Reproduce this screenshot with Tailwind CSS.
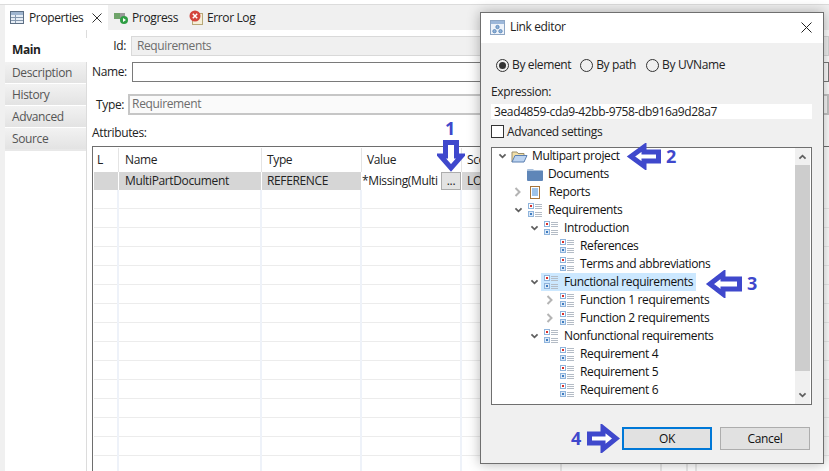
<!DOCTYPE html>
<html>
<head>
<meta charset="utf-8">
<script src="https://cdn.jsdelivr.net/npm/@tailwindcss/browser@4"></script>
</head>
<body>
<svg width="0" height="0" class="absolute">
  <defs>
    <symbol id="req" viewBox="0 0 14 15">
      <rect x="0.5" y="0.5" width="5" height="5" fill="#fff" stroke="#8fb4dc"/>
      <rect x="2" y="2" width="2" height="2" fill="#d8302a"/>
      <rect x="0.5" y="8.5" width="5" height="5" fill="#dce9f7" stroke="#8fb4dc"/>
      <rect x="2" y="10" width="2" height="2" fill="#3f7cc0"/>
      <path d="M7 1.500h7M7 3.500h7M7 5.500h7M7 9.500h7M7 11.500h7M7 13.500h7" stroke="#b4bcc6" stroke-width="1"/>
    </symbol>
    <symbol id="down" viewBox="0 0 10 8">
      <path d="M1.500 1.500 5 5 8.500 1.500" fill="none" stroke="#5f5f5f" stroke-width="2"/>
    </symbol>
    <symbol id="right" viewBox="0 0 8 10">
      <path d="M1.500 1 5.500 5 1.500 9" fill="none" stroke="#b4b4b4" stroke-width="2"/>
    </symbol>
  </defs>
</svg>

<div class="relative w-[829px] h-[471px] overflow-hidden bg-white text-[12px] leading-[16px] text-[#111] font-['Open_Sans','Liberation_Sans',sans-serif] tracking-[-0.37px]">

  <!-- view tabs -->
  <div class="mt-[4px] flex h-[26px] border-t border-[#dcdcdc] bg-[#f0f0f0] pl-[5px] items-stretch">
    <div class="flex w-[103px] items-center bg-white pl-[5px]">
      <svg width="14" height="13" viewBox="0 0 14 13" class="shrink-0"><rect x="0.5" y="0.5" width="13" height="12" fill="#e6edf5" stroke="#5d6f84"/><rect x="1" y="1" width="12" height="3" fill="#9fb5cf"/><path d="M1 6.500h12M1 9.500h12M5.500 4v8" stroke="#8497ad"/></svg>
      <span class="ml-[5px] text-[#222]">Properties</span>
      <svg width="10" height="10" viewBox="0 0 10 10" class="ml-[9px]"><path d="M.5.5l9 9M9.500.5l-9 9" stroke="#333" stroke-width="1"/></svg>
    </div>
    <div class="ml-[6px] flex items-center">
      <svg width="14" height="13" viewBox="0 0 14 13"><rect x="0" y="2" width="11" height="6" fill="#9a9a9a"/><rect x="0" y="2" width="6" height="6" fill="#6fa46a"/><circle cx="10" cy="9" r="4" fill="#2f9e44"/><path d="M9 7l3 2-3 2z" fill="#fff"/></svg>
      <span class="ml-[4px] text-[#222]">Progress</span>
    </div>
    <div class="ml-[10px] flex items-center">
      <svg width="16" height="15" viewBox="0 0 16 15"><rect x="4.500" y="3.500" width="10" height="11" fill="#f6efd8" stroke="#b8a878"/><circle cx="7" cy="6" r="5.500" fill="#d3443c"/><path d="M4.800 3.800l4.400 4.400M9.200 3.800l-4.400 4.400" stroke="#fff" stroke-width="1.500"/></svg>
      <span class="ml-[3px] text-[#222]">Error Log</span>
    </div>
  </div>

  <div class="flex h-[441px]">
    <!-- left strip and section tabs -->
    <div class="w-[5px] bg-[#f0f0f0]"></div>
    <div class="flex w-[82px] flex-col border-r border-[#dcdcdc] text-[#555]">
      <div class="h-[8px]"></div>
      <div class="-mr-px flex h-[24px] items-center bg-white pl-[7px] font-bold text-[#222]">Main</div>
      <div class="flex h-[22px] items-center border-b border-white bg-gradient-to-b from-[#f2f2f2] to-[#e3e3e3] pl-[7px]">Description</div>
      <div class="flex h-[22px] items-center border-b border-white bg-gradient-to-b from-[#f2f2f2] to-[#e3e3e3] pl-[7px]">History</div>
      <div class="flex h-[22px] items-center border-b border-white bg-gradient-to-b from-[#f2f2f2] to-[#e3e3e3] pl-[7px]">Advanced</div>
      <div class="flex h-[23px] items-center border-b-2 border-[#e8e8e8] bg-gradient-to-b from-[#f2f2f2] to-[#e3e3e3] pl-[7px]">Source</div>
    </div>

    <!-- form -->
    <div class="flex min-w-0 flex-1 flex-col pl-[5px]">
      <div class="mt-[6px] flex h-[20px] items-center">
        <span class="w-[35px] text-right text-[#222]">Id:</span>
        <div class="ml-[5px] flex h-[20px] w-[720px] items-center border border-[#d9d9d9] bg-[#f0f0f0] pl-[5px] text-[#6d6d6d]">Requirements</div>
      </div>
      <div class="mt-[6px] flex h-[20px] items-center">
        <span class="w-[35px] text-right text-[#222]">Name:</span>
        <div class="ml-[5px] h-[20px] w-[720px] border border-[#7a7a7a] bg-white"></div>
      </div>
      <div class="mt-[12px] flex h-[21px] items-center">
        <span class="w-[33px] text-right text-[#222]">Type:</span>
        <div class="ml-[4px] flex h-[21px] w-[720px] items-center border-2 border-[#c6c6c6] bg-[#fafafa] pb-px pl-[2px] text-[#6d6d6d]">Requirement</div>
      </div>
      <div class="mt-[10px] h-[16px] text-[#222]">Attributes:</div>

      <!-- table -->
      <div class="mt-[5px] flex-1 border-t border-l border-[#6e6e6e] pl-px pt-px">
        <div class="flex h-[24px] items-center text-[#222]">
          <div class="h-full w-[25px] border-r border-[#e4e4e4] pl-[3px] leading-[23px]">L</div>
          <div class="h-full w-[143px] border-r border-[#e4e4e4] pl-[6px] leading-[23px]">Name</div>
          <div class="h-full w-[100px] border-r border-[#e4e4e4] pl-[5px] leading-[23px]">Type</div>
          <div class="h-full w-[100px] border-r border-[#e4e4e4] pl-[5px] leading-[23px]">Value</div>
          <div class="h-full w-[100px] border-r border-[#e4e4e4] pl-[5px] leading-[23px]">Scope</div>
        </div>
        <div class="flex h-[18px] items-center text-[#222]">
          <div class="h-full w-[24px] bg-[#d6d6d6]"></div><div class="h-full w-px bg-white"></div>
          <div class="h-full w-[142px] bg-[#d6d6d6] pl-[6px] leading-[18px]">MultiPartDocument</div><div class="h-full w-px bg-white"></div>
          <div class="h-full w-[99px] bg-[#d6d6d6] pl-[5px] leading-[18px]">REFERENCE</div><div class="h-full w-px bg-white"></div>
          <div class="flex h-full w-[99px] items-center justify-between bg-white leading-[16px]">
            <span class="overflow-hidden whitespace-nowrap">*Missing(Multi</span>
            <div class="flex h-[18px] w-[20px] shrink-0 items-center justify-center border border-[#adadad] bg-[#e3e3e3]">...</div>
          </div><div class="h-full w-px bg-white"></div>
          <div class="h-full w-[100px] bg-[#d6d6d6] pl-[5px] leading-[18px]">LOCAL</div>
        </div>
        <div class="flex h-[283px] bg-[repeating-linear-gradient(to_bottom,transparent_0,transparent_18px,#ececec_18px,#ececec_19px)]">
          <div class="w-[25px] border-r-2 border-[#eef2f9]"></div>
          <div class="w-[143px] border-r-2 border-[#eef2f9]"></div>
          <div class="w-[100px] border-r-2 border-[#eef2f9]"></div>
          <div class="w-[100px] border-r-2 border-[#eef2f9]"></div>
          <div class="w-[100px] border-r-2 border-[#e8e8e8]"></div>
          <div class="w-[100px] border-r-2 border-[#e8e8e8]"></div>
          <div class="w-[26px] border-r-2 border-[#e8e8e8]"></div>
          <div class="w-[9px] border-r-2 border-[#e8e8e8]"></div>
        </div>
      </div>
    </div>
  </div>

  <!-- dialog window -->
  <div class="absolute left-[480px] top-[12px] flex h-[452px] w-[344px] flex-col border border-[#6f6f6f] bg-[#f0f0f0] shadow-[0_0_12px_rgba(0,0,0,0.3)]">
    <div class="flex h-[30px] shrink-0 items-center bg-white pb-[2px] pl-[9px] pr-[11px]">
      <svg width="15" height="15" viewBox="0 0 15 15"><rect x="0.5" y="0.5" width="14" height="14" fill="#eef3fa" stroke="#8ea6c4"/><rect x="1" y="1" width="13" height="3" fill="#9db8da"/><circle cx="7.500" cy="7" r="1.700" fill="#8eb2d9" stroke="#4a78ad" stroke-width=".7"/><circle cx="4.500" cy="11.200" r="1.700" fill="#8eb2d9" stroke="#4a78ad" stroke-width=".7"/><circle cx="10.500" cy="11.200" r="1.700" fill="#8eb2d9" stroke="#4a78ad" stroke-width=".7"/></svg>
      <span class="ml-[5px] text-[#222]">Link editor</span>
      <svg width="11" height="11" viewBox="0 0 11 11" class="ml-auto"><path d="M.5.5l10 10M10.500.5l-10 10" stroke="#222" stroke-width="1"/></svg>
    </div>

    <div class="flex flex-1 flex-col px-[10px]">
      <div class="ml-[5px] mt-[15px] flex h-[14px] items-center text-[#222]">
        <span class="flex h-[13px] w-[13px] items-center justify-center rounded-full border border-[#333]"><span class="h-[7px] w-[7px] rounded-full bg-[#333]"></span></span>
        <span class="ml-[3px]">By element</span>
        <span class="ml-[9px] h-[13px] w-[13px] rounded-full border border-[#333]"></span>
        <span class="ml-[3px]">By path</span>
        <span class="ml-[10px] h-[13px] w-[13px] rounded-full border border-[#333]"></span>
        <span class="ml-[3px]">By UVName</span>
      </div>
      <div class="mt-[12px] h-[16px] text-[#222]">Expression:</div>
      <div class="mt-[4px] flex h-[15px] w-[321px] items-center bg-white pl-[3px] text-[#222]">3ead4859-cda9-42bb-9758-db916a9d28a7</div>
      <div class="mt-[6px] flex h-[13px] items-center text-[#222]">
        <span class="h-[13px] w-[13px] border border-[#333] bg-white"></span>
        <span class="ml-[3px]">Advanced settings</span>
      </div>

      <!-- tree -->
      <div class="mt-[9px] flex h-[258px] w-[321px] border border-[#6f6f6f] bg-white">
        <div class="-mt-px min-w-0 flex-1 text-[#111]">
          <div class="flex h-[18px] items-center pl-[6px]">
            <svg width="9" height="7" class="w-[9px]"><use href="#down"/></svg>
            <svg width="17" height="13" viewBox="0 0 17 13" class="ml-[4px]"><path d="M1 12V2h5l1 1.500h6V6" fill="#f2dfa8" stroke="#9a8f6f"/><path d="M1 12l3-6.500h12l-3 6.500z" fill="#bcd3f0" stroke="#5b7fb0"/></svg>
            <span class="ml-[4px]">Multipart project</span>
          </div>
          <div class="flex h-[18px] items-center pl-[35px]">
            <svg width="16" height="13" viewBox="0 0 16 13"><path d="M0 3V2q0-1 1-1h5l1 1h8q1 0 1 1z" fill="#a9c0dc"/><path d="M0 3h16v9q0 1-1 1H1q-1 0-1-1z" fill="#5f86b8"/></svg>
            <span class="ml-[5px]">Documents</span>
          </div>
          <div class="flex h-[18px] items-center pl-[22px]">
            <svg width="8" height="10" class="w-[8px]"><use href="#right"/></svg>
            <svg width="10" height="13" viewBox="0 0 10 13" class="ml-[8px]"><rect x="0.500" y="0.500" width="9" height="12" fill="#fff" stroke="#a8753a"/><path d="M2 3h6M2 5h6M2 7h6M2 9h6" stroke="#3f86d0"/></svg>
            <span class="ml-[9px]">Reports</span>
          </div>
          <div class="flex h-[18px] items-center pl-[22px]">
            <svg width="9" height="7" class="w-[9px]"><use href="#down"/></svg>
            <svg width="14" height="15" class="ml-[5px]"><use href="#req"/></svg>
            <span class="ml-[6px]">Requirements</span>
          </div>
          <div class="flex h-[18px] items-center pl-[38px]">
            <svg width="9" height="7" class="w-[9px]"><use href="#down"/></svg>
            <svg width="14" height="15" class="ml-[5px]"><use href="#req"/></svg>
            <span class="ml-[6px]">Introduction</span>
          </div>
          <div class="flex h-[18px] items-center pl-[68px]">
            <svg width="14" height="15"><use href="#req"/></svg>
            <span class="ml-[6px]">References</span>
          </div>
          <div class="flex h-[18px] items-center pl-[68px]">
            <svg width="14" height="15"><use href="#req"/></svg>
            <span class="ml-[6px]">Terms and abbreviations</span>
          </div>
          <div class="flex h-[18px] items-center pl-[38px]">
            <svg width="9" height="7" class="w-[9px]"><use href="#down"/></svg>
            <div class="ml-[2px] flex h-[18px] items-center bg-[#cce8ff] pl-[3px] pr-[3px]">
              <svg width="14" height="15"><use href="#req"/></svg>
              <span class="ml-[6px]">Functional requirements</span>
            </div>
          </div>
          <div class="flex h-[18px] items-center pl-[54px]">
            <svg width="8" height="10" class="w-[8px]"><use href="#right"/></svg>
            <svg width="14" height="15" class="ml-[6px]"><use href="#req"/></svg>
            <span class="ml-[6px]">Function 1 requirements</span>
          </div>
          <div class="flex h-[18px] items-center pl-[54px]">
            <svg width="8" height="10" class="w-[8px]"><use href="#right"/></svg>
            <svg width="14" height="15" class="ml-[6px]"><use href="#req"/></svg>
            <span class="ml-[6px]">Function 2 requirements</span>
          </div>
          <div class="flex h-[18px] items-center pl-[38px]">
            <svg width="9" height="7" class="w-[9px]"><use href="#down"/></svg>
            <svg width="14" height="15" class="ml-[5px]"><use href="#req"/></svg>
            <span class="ml-[6px]">Nonfunctional requirements</span>
          </div>
          <div class="flex h-[18px] items-center pl-[68px]">
            <svg width="14" height="15"><use href="#req"/></svg>
            <span class="ml-[6px]">Requirement 4</span>
          </div>
          <div class="flex h-[18px] items-center pl-[68px]">
            <svg width="14" height="15"><use href="#req"/></svg>
            <span class="ml-[6px]">Requirement 5</span>
          </div>
          <div class="flex h-[18px] items-center pl-[68px]">
            <svg width="14" height="15"><use href="#req"/></svg>
            <span class="ml-[6px]">Requirement 6</span>
          </div>
        </div>
        <!-- scrollbar -->
        <div class="mr-px flex w-[15px] shrink-0 flex-col bg-[#f0f0f0]">
          <div class="flex h-[17px] items-center justify-center"><svg width="9" height="7" class="rotate-180"><use href="#down"/></svg></div>
          <div class="h-[206px] bg-[#cdcdcd]"></div>
          <div class="mt-auto flex h-[17px] items-center justify-center"><svg width="9" height="7"><use href="#down"/></svg></div>
        </div>
      </div>

      <!-- buttons -->
      <div class="mt-[22px] flex justify-end gap-[8px] pr-[3px] text-[#111]">
        <div class="flex h-[23px] w-[90px] items-center justify-center border-2 border-[#0078d7] bg-[#e1e1e1]">OK</div>
        <div class="flex h-[23px] w-[90px] items-center justify-center border border-[#adadad] bg-[#e1e1e1]">Cancel</div>
      </div>
    </div>
  </div>

  <!-- callouts over the screenshot -->
  <span class="absolute left-[445px] top-[118px] text-[18px] leading-[20px] font-bold tracking-normal text-[#3f48cc]">1</span>
  <svg class="absolute left-[437px] top-[139px]" width="28" height="34" viewBox="0 0 28 34"><path d="M8.500 3.500h11V17h5L14 29 3.500 17h5z" fill="#fff" stroke="#3f48cc" stroke-width="5"/></svg>
  <span class="absolute left-[666px] top-[146px] text-[18px] leading-[20px] font-bold tracking-normal text-[#3f48cc]">2</span>
  <svg class="absolute left-[625px] top-[143px]" width="37" height="27" viewBox="0 0 37 27"><path d="M33.500 9V18H19V23L6 13.500 19 4V9z" fill="#fff" stroke="#3f48cc" stroke-width="5"/></svg>
  <span class="absolute left-[747px] top-[273px] text-[18px] leading-[20px] font-bold tracking-normal text-[#3f48cc]">3</span>
  <svg class="absolute left-[704px] top-[270px]" width="39" height="28" viewBox="0 0 39 28"><path d="M35.500 9V19H19V24L6 14 19 4V9z" fill="#fff" stroke="#3f48cc" stroke-width="5"/></svg>
  <span class="absolute left-[571px] top-[428px] text-[18px] leading-[20px] font-bold tracking-normal text-[#3f48cc]">4</span>
  <svg class="absolute left-[586px] top-[424px]" width="35" height="29" viewBox="0 0 35 29"><path d="M3.500 10V19H17V25L30 14.500 17 4V10z" fill="#fff" stroke="#3f48cc" stroke-width="5"/></svg>
</div>
</body>
</html>
